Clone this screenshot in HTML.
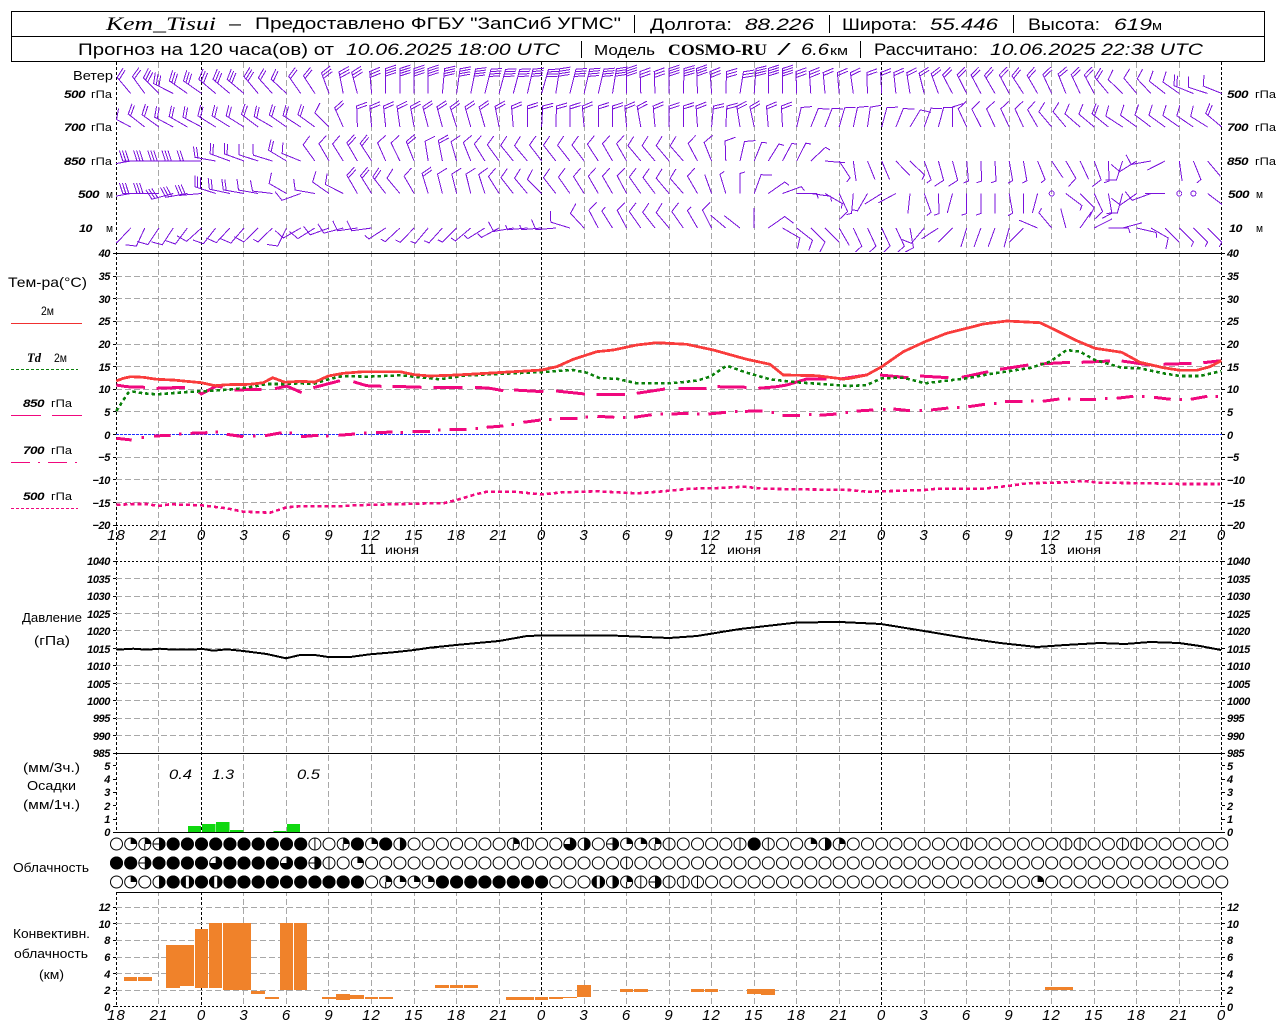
<!DOCTYPE html>
<html lang="ru"><head><meta charset="utf-8"><title>Kem_Tisui</title>
<style>
html,body{margin:0;padding:0;background:#fff}
svg{display:block}
text{font-family:"Liberation Sans",sans-serif;fill:#000}
.i{font-style:italic}
.t{font-size:17px}
.m{font-size:13px}
.y{font-style:italic;font-weight:bold;font-size:11px;letter-spacing:-.4px}
.x{font-style:italic;font-size:15px;text-anchor:middle;letter-spacing:1px}
.e{text-anchor:end}
.sf{font-family:"Liberation Serif",serif}
</style></head><body>
<svg xmlns="http://www.w3.org/2000/svg" width="1280" height="1024" viewBox="0 0 1280 1024">
<defs>
<clipPath id="wc"><rect x="116" y="62" width="1106" height="190"/></clipPath>
<path id="n" d="M0 0V-20"/>
<path id="h" d="M0 0V-20l5-1.6"/>
<path id="a" d="M0 0V-20l10.5-3.4"/>
<path id="b" d="M0 0V-21l10.5-3.4M0-18l10.5-3.4"/>
<path id="c" d="M0 0V-22l10.5-3.4M0-19l10.5-3.4M0-16l10.5-3.4"/>
<path id="d" d="M0 0V-25l10.5-3.4M0-22.5l10.5-3.4M0-20l10.5-3.4M0-17.5l10.5-3.4"/>
<circle id="o" r="6" fill="#fff" stroke="#000"/>
<circle id="F" r="6.5" fill="#000"/>
<path id="q" d="M0 0V-6.5A6.5 6.5 0 0 1 6.5 0Z" fill="#000"/>
<path id="Q" d="M0 0V-6.5A6.5 6.5 0 0 1 6.5 0ZM-.5 0h1v6h-1Z" fill="#000"/>
<path id="R" d="M0-6.5A6.5 6.5 0 0 1 0 6.5Z" fill="#000"/>
<path id="H" d="M0-6.5A6.5 6.5 0 0 1 0 6.5ZM-6 -.5h6v1h-6Z" fill="#000"/>
<path id="V" d="M-.5-6h1v12h-1Z" fill="#000"/>
<path id="T" d="M0 0V-6.5A6.5 6.5 0 1 1-6.5 0Z" fill="#000"/>
<path id="B" d="M-1.5-6.4A6.5 6.5 0 0 0-1.5 6.4ZM1.5-6.4A6.5 6.5 0 0 1 1.5 6.4Z" fill="#000"/>
</defs>
<rect width="1280" height="1024" fill="#fff"/>

<!-- vertical grid -->
<path fill="none" stroke="#a8a8a8" stroke-dasharray="6 3" shape-rendering="crispEdges" d="M158.5 62V1007M243.5 62V1007M286.5 62V1007M328.5 62V1007M371.5 62V1007M414.5 62V1007M456.5 62V1007M499.5 62V1007M584.5 62V1007M626.5 62V1007M669.5 62V1007M711.5 62V1007M754.5 62V1007M796.5 62V1007M839.5 62V1007M924.5 62V1007M966.5 62V1007M1009.5 62V1007M1051.5 62V1007M1094.5 62V1007M1136.5 62V1007M1179.5 62V1007"/>
<path fill="none" stroke="#000" stroke-dasharray="3 2" shape-rendering="crispEdges" d="M116.5 62V1007M201.5 62V1007M541.5 62V1007M881.5 62V1007M1221.5 62V1007"/>
<!-- horizontal grid -->
<path fill="none" stroke="#a8a8a8" stroke-dasharray="6 3" shape-rendering="crispEdges" d="M116 276.5H1222M116 298.5H1222M116 321.5H1222M116 344.5H1222M116 366.5H1222M116 389.5H1222M116 411.5H1222M116 457.5H1222M116 479.5H1222M116 502.5H1222M116 578.5H1222M116 596.5H1222M116 613.5H1222M116 630.5H1222M116 648.5H1222M116 665.5H1222M116 683.5H1222M116 700.5H1222M116 718.5H1222M116 735.5H1222M116 907.5H1222M116 923.5H1222M116 940.5H1222M116 957.5H1222M116 973.5H1222M116 990.5H1222"/>
<rect x="100" y="833" width="1130" height="59" fill="#fff"/>
<!-- ticks -->
<path fill="none" stroke="#000" shape-rendering="crispEdges" d="M113 276.5h3M113 298.5h3M113 321.5h3M113 344.5h3M113 366.5h3M113 389.5h3M113 411.5h3M113 434.5h3M113 457.5h3M113 479.5h3M113 502.5h3M113 525.5h3M113 253.5h3M113 561.5h3M113 578.5h3M113 596.5h3M113 613.5h3M113 630.5h3M113 648.5h3M113 665.5h3M113 683.5h3M113 700.5h3M113 718.5h3M113 735.5h3M113 753.5h3M113 765.5h3M113 779.5h3M113 792.5h3M113 805.5h3M113 819.5h3M113 832.5h3M113 907.5h3M113 923.5h3M113 940.5h3M113 957.5h3M113 973.5h3M113 990.5h3M113 1006.5h3M1222 276.5h3M1222 298.5h3M1222 321.5h3M1222 344.5h3M1222 366.5h3M1222 389.5h3M1222 411.5h3M1222 434.5h3M1222 457.5h3M1222 479.5h3M1222 502.5h3M1222 525.5h3M1222 253.5h3M1222 561.5h3M1222 578.5h3M1222 596.5h3M1222 613.5h3M1222 630.5h3M1222 648.5h3M1222 665.5h3M1222 683.5h3M1222 700.5h3M1222 718.5h3M1222 735.5h3M1222 753.5h3M1222 765.5h3M1222 779.5h3M1222 792.5h3M1222 805.5h3M1222 819.5h3M1222 832.5h3M1222 907.5h3M1222 923.5h3M1222 940.5h3M1222 957.5h3M1222 973.5h3M1222 990.5h3M1222 1006.5h3"/>
<path fill="none" stroke="#000" shape-rendering="crispEdges" d="M116 253.5H1222M116 753.5H1222M116 832.5H1222M116 892.5H1222"/>
<path fill="none" stroke="#000" stroke-dasharray="2 2" shape-rendering="crispEdges" d="M116 525.5H1222M116 561.5H1222M116 1006.5H1222"/>
<path fill="none" stroke="#1f2fff" stroke-dasharray="3 1" shape-rendering="crispEdges" d="M116 434.5H1222"/>

<!-- header -->
<path fill="#fff" stroke="#000" shape-rendering="crispEdges" d="M11.5 11.5H1264.5V61.5H11.5Z"/>
<path fill="none" stroke="#000" shape-rendering="crispEdges" d="M11.5 36.5H1264.5M634.5 15V33M829.5 15V33M1013.5 15V33M581.5 41V58M860.5 41V58"/>
<text class="sf i" x="106" y="30" font-size="19" lengthAdjust="spacingAndGlyphs" textLength="110">Kem_Tisui</text>
<text class="t" x="229" y="29" lengthAdjust="spacingAndGlyphs" textLength="12">—</text>
<text class="t" x="255" y="29" lengthAdjust="spacingAndGlyphs" textLength="366">Предоставлено ФГБУ "ЗапСиб УГМС"</text>
<text class="t" x="650" y="30" lengthAdjust="spacingAndGlyphs" textLength="82">Долгота:</text>
<text class="t i" x="745" y="30" font-size="18" lengthAdjust="spacingAndGlyphs" textLength="69">88.226</text>
<text class="t" x="842" y="30" lengthAdjust="spacingAndGlyphs" textLength="75">Широта:</text>
<text class="t i" x="930" y="30" font-size="18" lengthAdjust="spacingAndGlyphs" textLength="68">55.446</text>
<text class="t" x="1028" y="30" lengthAdjust="spacingAndGlyphs" textLength="72">Высота:</text>
<text class="t i" x="1114" y="30" font-size="18" lengthAdjust="spacingAndGlyphs" textLength="38">619</text>
<text x="1152" y="30" font-size="13" lengthAdjust="spacingAndGlyphs" textLength="10">м</text>
<text class="t" x="78" y="55" lengthAdjust="spacingAndGlyphs" textLength="256">Прогноз на 120 часа(ов) от</text>
<text class="t i" x="346" y="55" lengthAdjust="spacingAndGlyphs" textLength="214">10.06.2025 18:00 UTC</text>
<text x="594" y="55" font-size="15" lengthAdjust="spacingAndGlyphs" textLength="61">Модель</text>
<text class="sf" x="668" y="55" font-size="16" font-weight="bold" lengthAdjust="spacingAndGlyphs" textLength="99">COSMO-RU</text>
<text class="t i" x="779" y="55" lengthAdjust="spacingAndGlyphs" textLength="9">/</text>
<text class="t i" x="801" y="55" lengthAdjust="spacingAndGlyphs" textLength="28">6.6</text>
<text x="830" y="55" font-size="13" lengthAdjust="spacingAndGlyphs" textLength="18">км</text>
<text class="t" x="874" y="55" lengthAdjust="spacingAndGlyphs" textLength="104">Рассчитано:</text>
<text class="t i" x="990" y="55" lengthAdjust="spacingAndGlyphs" textLength="213">10.06.2025 22:38 UTC</text>

<!-- left wind labels -->
<text class="m" x="73" y="80" lengthAdjust="spacingAndGlyphs" textLength="40">Ветер</text>
<text class="y" x="64" y="98" lengthAdjust="spacingAndGlyphs" textLength="21">500</text><text x="91" y="98" font-size="11" lengthAdjust="spacingAndGlyphs" textLength="21">гПа</text>
<text class="y" x="64" y="131" lengthAdjust="spacingAndGlyphs" textLength="21">700</text><text x="91" y="131" font-size="11" lengthAdjust="spacingAndGlyphs" textLength="21">гПа</text>
<text class="y" x="64" y="165" lengthAdjust="spacingAndGlyphs" textLength="21">850</text><text x="91" y="165" font-size="11" lengthAdjust="spacingAndGlyphs" textLength="21">гПа</text>
<text class="y" x="78" y="198" lengthAdjust="spacingAndGlyphs" textLength="21">500</text><text x="106" y="198" font-size="11" lengthAdjust="spacingAndGlyphs" textLength="7">м</text>
<text class="y" x="79" y="232" lengthAdjust="spacingAndGlyphs" textLength="13">10</text><text x="106" y="232" font-size="11" lengthAdjust="spacingAndGlyphs" textLength="7">м</text>
<text class="y" x="1227" y="98" lengthAdjust="spacingAndGlyphs" textLength="21">500</text><text x="1255" y="98" font-size="11" lengthAdjust="spacingAndGlyphs" textLength="21">гПа</text>
<text class="y" x="1227" y="131" lengthAdjust="spacingAndGlyphs" textLength="21">700</text><text x="1255" y="131" font-size="11" lengthAdjust="spacingAndGlyphs" textLength="21">гПа</text>
<text class="y" x="1227" y="165" lengthAdjust="spacingAndGlyphs" textLength="21">850</text><text x="1255" y="165" font-size="11" lengthAdjust="spacingAndGlyphs" textLength="21">гПа</text>
<text class="y" x="1228" y="198" lengthAdjust="spacingAndGlyphs" textLength="21">500</text><text x="1256" y="198" font-size="11" lengthAdjust="spacingAndGlyphs" textLength="7">м</text>
<text class="y" x="1229" y="232" lengthAdjust="spacingAndGlyphs" textLength="13">10</text><text x="1256" y="232" font-size="11" lengthAdjust="spacingAndGlyphs" textLength="7">м</text>

<!-- barbs -->
<g clip-path="url(#wc)" fill="none" stroke="#7a12dc" shape-rendering="crispEdges">
<g transform="translate(0 93.5)">
<use href="#b" transform="translate(130.7)rotate(-40)"/><use href="#b" transform="translate(144.8)rotate(-36)"/><use href="#c" transform="translate(159)rotate(-45)"/><use href="#c" transform="translate(173.2)rotate(-63)"/><use href="#c" transform="translate(187.4)rotate(-55)"/><use href="#c" transform="translate(201.5)rotate(-55)"/><use href="#c" transform="translate(215.7)rotate(-50)"/><use href="#c" transform="translate(229.9)rotate(-50)"/><use href="#c" transform="translate(244)rotate(-50)"/><use href="#c" transform="translate(258.2)rotate(-40)"/><use href="#b" transform="translate(272.4)rotate(-42)"/><use href="#b" transform="translate(286.5)rotate(-47)"/><use href="#b" transform="translate(300.7)rotate(-35)"/><use href="#b" transform="translate(314.9)rotate(-33)"/><use href="#c" transform="translate(329)rotate(-20)"/><use href="#c" transform="translate(343.2)rotate(-11)"/><use href="#c" transform="translate(357.4)rotate(-15)"/><use href="#c" transform="translate(371.6)rotate(-5)"/><use href="#d" transform="translate(385.7)"/><use href="#d" transform="translate(399.9)"/><use href="#d" transform="translate(414.1)"/><use href="#d" transform="translate(428.2)"/><use href="#d" transform="translate(442.4)rotate(5)"/><use href="#d" transform="translate(456.6)rotate(8)"/><use href="#d" transform="translate(470.8)rotate(11)"/><use href="#d" transform="translate(484.9)rotate(14)"/><use href="#d" transform="translate(499.1)rotate(15)"/><use href="#d" transform="translate(513.3)rotate(15)"/><use href="#d" transform="translate(527.4)rotate(13)"/><use href="#d" transform="translate(541.6)rotate(16)"/><use href="#d" transform="translate(555.8)rotate(9)"/><use href="#d" transform="translate(569.9)rotate(14)"/><use href="#d" transform="translate(584.1)rotate(13)"/><use href="#d" transform="translate(598.3)rotate(13)"/><use href="#d" transform="translate(612.5)rotate(9)"/><use href="#d" transform="translate(626.6)"/><use href="#c" transform="translate(640.8)rotate(-2)"/><use href="#c" transform="translate(655)rotate(-2)"/><use href="#d" transform="translate(669.1)"/><use href="#d" transform="translate(683.3)rotate(2)"/><use href="#d" transform="translate(697.5)rotate(-2)"/><use href="#c" transform="translate(711.6)rotate(-4)"/><use href="#c" transform="translate(725.8)rotate(2)"/><use href="#c" transform="translate(740)rotate(9)"/><use href="#d" transform="translate(754.2)rotate(4)"/><use href="#d" transform="translate(768.3)"/><use href="#d" transform="translate(782.5)"/><use href="#c" transform="translate(796.7)rotate(-2)"/><use href="#c" transform="translate(810.8)rotate(-4)"/><use href="#b" transform="translate(825)rotate(-5)"/><use href="#b" transform="translate(839.2)rotate(-5)"/><use href="#b" transform="translate(853.3)rotate(-8)"/><use href="#b" transform="translate(867.5)rotate(-2)"/><use href="#b" transform="translate(881.7)rotate(-3)"/><use href="#b" transform="translate(895.9)rotate(-6)"/><use href="#b" transform="translate(910)rotate(-9)"/><use href="#b" transform="translate(924.2)rotate(-14)"/><use href="#b" transform="translate(938.4)rotate(-20)"/><use href="#b" transform="translate(952.5)rotate(-28)"/><use href="#b" transform="translate(966.7)rotate(-27)"/><use href="#b" transform="translate(980.9)rotate(-28)"/><use href="#b" transform="translate(995)rotate(-30)"/><use href="#b" transform="translate(1009.2)rotate(-28)"/><use href="#b" transform="translate(1023.4)rotate(-33)"/><use href="#b" transform="translate(1037.6)rotate(-30)"/><use href="#b" transform="translate(1051.7)rotate(-25)"/><use href="#b" transform="translate(1065.9)rotate(-22)"/><use href="#b" transform="translate(1080.1)rotate(-25)"/><use href="#b" transform="translate(1094.2)rotate(-28)"/><use href="#b" transform="translate(1108.4)rotate(-40)"/><use href="#a" transform="translate(1122.6)rotate(-46)"/><use href="#a" transform="translate(1136.7)rotate(-40)"/><use href="#a" transform="translate(1150.9)rotate(-43)"/><use href="#a" transform="translate(1165.1)rotate(-52)"/><use href="#a" transform="translate(1179.3)rotate(-55)"/><use href="#b" transform="translate(1193.4)rotate(-68)"/><use href="#a" transform="translate(1207.6)rotate(-72)"/><use href="#a" transform="translate(1221.8)rotate(-68)"/>
</g>
<g transform="translate(0 127)">
<use href="#c" transform="translate(130.7)rotate(-62)"/><use href="#b" transform="translate(144.8)rotate(-52)"/><use href="#b" transform="translate(159)rotate(-54)"/><use href="#b" transform="translate(173.2)rotate(-62)"/><use href="#b" transform="translate(187.4)rotate(-60)"/><use href="#b" transform="translate(201.5)rotate(-62)"/><use href="#b" transform="translate(215.7)rotate(-58)"/><use href="#b" transform="translate(229.9)rotate(-58)"/><use href="#b" transform="translate(244)rotate(-58)"/><use href="#b" transform="translate(258.2)rotate(-53)"/><use href="#b" transform="translate(272.4)rotate(-60)"/><use href="#b" transform="translate(286.5)rotate(-55)"/><use href="#b" transform="translate(300.7)rotate(-57)"/><use href="#b" transform="translate(314.9)rotate(-54)"/><use href="#a" transform="translate(329)rotate(-45)"/><use href="#b" transform="translate(343.2)rotate(-24)"/><use href="#b" transform="translate(357.4)rotate(-2)"/><use href="#b" transform="translate(371.6)rotate(-5)"/><use href="#b" transform="translate(385.7)rotate(-6)"/><use href="#b" transform="translate(399.9)rotate(-8)"/><use href="#b" transform="translate(414.1)rotate(-10)"/><use href="#b" transform="translate(428.2)rotate(-15)"/><use href="#b" transform="translate(442.4)rotate(-15)"/><use href="#b" transform="translate(456.6)rotate(-18)"/><use href="#b" transform="translate(470.8)rotate(-16)"/><use href="#b" transform="translate(484.9)rotate(-16)"/><use href="#b" transform="translate(499.1)rotate(-11)"/><use href="#b" transform="translate(513.3)rotate(-5)"/><use href="#b" transform="translate(527.4)"/><use href="#b" transform="translate(541.6)rotate(3)"/><use href="#b" transform="translate(555.8)rotate(2)"/><use href="#b" transform="translate(569.9)"/><use href="#b" transform="translate(584.1)rotate(-5)"/><use href="#b" transform="translate(598.3)"/><use href="#b" transform="translate(612.5)"/><use href="#b" transform="translate(626.6)rotate(-5)"/><use href="#b" transform="translate(640.8)rotate(-10)"/><use href="#b" transform="translate(655)rotate(-5)"/><use href="#b" transform="translate(669.1)"/><use href="#b" transform="translate(683.3)"/><use href="#b" transform="translate(697.5)rotate(-4)"/><use href="#b" transform="translate(711.6)rotate(5)"/><use href="#b" transform="translate(725.8)rotate(3)"/><use href="#b" transform="translate(740)rotate(-9)"/><use href="#b" transform="translate(754.2)rotate(-12)"/><use href="#b" transform="translate(768.3)rotate(-5)"/><use href="#b" transform="translate(782.5)rotate(-3)"/><use href="#a" transform="translate(796.7)rotate(13)"/><use href="#a" transform="translate(810.8)rotate(22)"/><use href="#a" transform="translate(825)rotate(21)"/><use href="#a" transform="translate(839.2)rotate(16)"/><use href="#a" transform="translate(853.3)rotate(12)"/><use href="#a" transform="translate(867.5)rotate(8)"/><use href="#a" transform="translate(881.7)rotate(15)"/><use href="#a" transform="translate(895.9)rotate(22)"/><use href="#a" transform="translate(910)rotate(31)"/><use href="#a" transform="translate(924.2)rotate(20)"/><use href="#a" transform="translate(938.4)rotate(15)"/><use href="#a" transform="translate(952.5)"/><use href="#a" transform="translate(966.7)rotate(-25)"/><use href="#a" transform="translate(980.9)rotate(-27)"/><use href="#a" transform="translate(995)rotate(-25)"/><use href="#a" transform="translate(1009.2)rotate(-25)"/><use href="#a" transform="translate(1023.4)rotate(-25)"/><use href="#a" transform="translate(1037.6)rotate(-30)"/><use href="#a" transform="translate(1051.7)rotate(-40)"/><use href="#a" transform="translate(1065.9)rotate(-40)"/><use href="#a" transform="translate(1080.1)rotate(-49)"/><use href="#a" transform="translate(1094.2)rotate(-50)"/><use href="#b" transform="translate(1108.4)rotate(-51)"/><use href="#a" transform="translate(1122.6)rotate(-57)"/><use href="#a" transform="translate(1136.7)rotate(-54)"/><use href="#a" transform="translate(1150.9)rotate(-53)"/><use href="#a" transform="translate(1165.1)rotate(-54)"/><use href="#a" transform="translate(1179.3)rotate(-55)"/><use href="#a" transform="translate(1193.4)rotate(-56)"/><use href="#a" transform="translate(1207.6)rotate(-58)"/><use href="#b" transform="translate(1221.8)rotate(-50)"/>
</g>
<g transform="translate(0 161)">
<use href="#c" transform="translate(130.7)rotate(-100)"/><use href="#c" transform="translate(144.8)rotate(-90)"/><use href="#c" transform="translate(159)rotate(-90)"/><use href="#c" transform="translate(173.2)rotate(-90)"/><use href="#c" transform="translate(187.4)rotate(-90)"/><use href="#b" transform="translate(201.5)rotate(-90)"/><use href="#b" transform="translate(215.7)rotate(-80)"/><use href="#b" transform="translate(229.9)rotate(-70)"/><use href="#b" transform="translate(244)rotate(-70)"/><use href="#a" transform="translate(258.2)rotate(-72)"/><use href="#a" transform="translate(272.4)rotate(-73)"/><use href="#b" transform="translate(286.5)rotate(-59)"/><use href="#a" transform="translate(300.7)rotate(-68)"/><use href="#a" transform="translate(314.9)rotate(-36)"/><use href="#a" transform="translate(329)rotate(-30)"/><use href="#a" transform="translate(343.2)rotate(-32)"/><use href="#b" transform="translate(357.4)rotate(-30)"/><use href="#b" transform="translate(371.6)rotate(-33)"/><use href="#a" transform="translate(385.7)rotate(-24)"/><use href="#a" transform="translate(399.9)rotate(-26)"/><use href="#b" transform="translate(414.1)rotate(-22)"/><use href="#a" transform="translate(428.2)rotate(-9)"/><use href="#b" transform="translate(442.4)rotate(-11)"/><use href="#a" transform="translate(456.6)rotate(-16)"/><use href="#a" transform="translate(470.8)rotate(-22)"/><use href="#a" transform="translate(484.9)rotate(-32)"/><use href="#a" transform="translate(499.1)rotate(-36)"/><use href="#a" transform="translate(513.3)rotate(-39)"/><use href="#a" transform="translate(527.4)rotate(-40)"/><use href="#a" transform="translate(541.6)rotate(-37)"/><use href="#a" transform="translate(555.8)rotate(-38)"/><use href="#a" transform="translate(569.9)rotate(-38)"/><use href="#a" transform="translate(584.1)rotate(-37)"/><use href="#a" transform="translate(598.3)rotate(-33)"/><use href="#a" transform="translate(612.5)rotate(-30)"/><use href="#a" transform="translate(626.6)rotate(-30)"/><use href="#a" transform="translate(640.8)rotate(-40)"/><use href="#a" transform="translate(655)rotate(-40)"/><use href="#a" transform="translate(669.1)rotate(-40)"/><use href="#a" transform="translate(683.3)rotate(-41)"/><use href="#a" transform="translate(697.5)rotate(-28)"/><use href="#a" transform="translate(711.6)rotate(-22)"/><use href="#a" transform="translate(725.8)rotate(-2)"/><use href="#a" transform="translate(740)rotate(13)"/><use href="#h" transform="translate(754.2)rotate(22)"/><use href="#h" transform="translate(768.3)rotate(32)"/><use href="#h" transform="translate(782.5)rotate(28)"/><use href="#h" transform="translate(796.7)rotate(27)"/><use href="#h" transform="translate(810.8)rotate(47)"/><use href="#n" transform="translate(825)rotate(95)"/><use href="#h" transform="translate(839.2)rotate(147)"/><use href="#n" transform="translate(853.3)rotate(172)"/><use href="#n" transform="translate(867.5)rotate(158)"/><use href="#n" transform="translate(881.7)rotate(157)"/><use href="#n" transform="translate(895.9)rotate(136)"/><use href="#h" transform="translate(910)rotate(134)"/><use href="#h" transform="translate(924.2)rotate(160)"/><use href="#a" transform="translate(938.4)rotate(165)"/><use href="#a" transform="translate(952.5)rotate(165)"/><use href="#h" transform="translate(966.7)rotate(175)"/><use href="#h" transform="translate(980.9)rotate(178)"/><use href="#h" transform="translate(995)rotate(177)"/><use href="#h" transform="translate(1009.2)rotate(170)"/><use href="#h" transform="translate(1023.4)rotate(170)"/><use href="#h" transform="translate(1037.6)rotate(158)"/><use href="#n" transform="translate(1051.7)rotate(146)"/><use href="#a" transform="translate(1065.9)rotate(150)"/><use href="#n" transform="translate(1080.1)rotate(155)"/><use href="#a" transform="translate(1094.2)rotate(160)"/><use href="#h" transform="translate(1108.4)rotate(178)"/><use href="#a" transform="translate(1122.6)rotate(-162)"/><use href="#a" transform="translate(1136.7)rotate(-122)"/><use href="#a" transform="translate(1150.9)rotate(-100)"/><use href="#n" transform="translate(1165.1)rotate(-117)"/><use href="#n" transform="translate(1179.3)rotate(172)"/><use href="#h" transform="translate(1193.4)rotate(158)"/><use href="#n" transform="translate(1207.6)rotate(140)"/>
</g>
<g transform="translate(0 193.5)">
<use href="#c" transform="translate(130.7)rotate(-100)"/><use href="#c" transform="translate(144.8)rotate(-90)"/><use href="#c" transform="translate(159)rotate(-90)"/><use href="#c" transform="translate(173.2)rotate(-105)"/><use href="#c" transform="translate(187.4)rotate(-100)"/><use href="#c" transform="translate(201.5)rotate(-95)"/><use href="#c" transform="translate(215.7)rotate(-72)"/><use href="#b" transform="translate(229.9)rotate(-78)"/><use href="#b" transform="translate(244)rotate(-80)"/><use href="#a" transform="translate(258.2)rotate(-80)"/><use href="#a" transform="translate(272.4)rotate(-83)"/><use href="#a" transform="translate(286.5)rotate(-60)"/><use href="#a" transform="translate(300.7)rotate(-110)"/><use href="#a" transform="translate(314.9)rotate(-80)"/><use href="#a" transform="translate(329)rotate(-55)"/><use href="#a" transform="translate(343.2)rotate(-63)"/><use href="#b" transform="translate(357.4)rotate(-30)"/><use href="#b" transform="translate(371.6)rotate(-32)"/><use href="#b" transform="translate(385.7)rotate(-38)"/><use href="#a" transform="translate(399.9)rotate(-40)"/><use href="#a" transform="translate(414.1)rotate(-30)"/><use href="#b" transform="translate(428.2)rotate(-17)"/><use href="#a" transform="translate(442.4)rotate(-14)"/><use href="#a" transform="translate(456.6)rotate(-14)"/><use href="#a" transform="translate(470.8)rotate(-14)"/><use href="#a" transform="translate(484.9)rotate(-18)"/><use href="#a" transform="translate(499.1)rotate(-32)"/><use href="#a" transform="translate(513.3)rotate(-38)"/><use href="#a" transform="translate(527.4)rotate(-40)"/><use href="#a" transform="translate(541.6)rotate(-45)"/><use href="#a" transform="translate(555.8)rotate(-38)"/><use href="#a" transform="translate(569.9)rotate(-35)"/><use href="#a" transform="translate(584.1)rotate(-32)"/><use href="#a" transform="translate(598.3)rotate(-30)"/><use href="#a" transform="translate(612.5)rotate(-30)"/><use href="#a" transform="translate(626.6)rotate(-28)"/><use href="#a" transform="translate(640.8)rotate(-35)"/><use href="#a" transform="translate(655)rotate(-37)"/><use href="#a" transform="translate(669.1)rotate(-40)"/><use href="#a" transform="translate(683.3)rotate(-41)"/><use href="#a" transform="translate(697.5)rotate(-30)"/><use href="#n" transform="translate(711.6)rotate(-20)"/><use href="#h" transform="translate(725.8)rotate(-17)"/><use href="#h" transform="translate(740)"/><use href="#a" transform="translate(754.2)rotate(20)"/><use href="#h" transform="translate(768.3)rotate(55)"/><use href="#h" transform="translate(782.5)rotate(70)"/><use href="#h" transform="translate(796.7)rotate(90)"/><use href="#h" transform="translate(810.8)rotate(98)"/><use href="#h" transform="translate(825)rotate(120)"/><use href="#a" transform="translate(839.2)rotate(155)"/><use href="#h" transform="translate(853.3)rotate(-175)"/><use href="#h" transform="translate(867.5)rotate(-150)"/><use href="#n" transform="translate(881.7)rotate(-122)"/><use href="#n" transform="translate(895.9)rotate(-118)"/><use href="#n" transform="translate(910)rotate(-174)"/><use href="#h" transform="translate(924.2)rotate(160)"/><use href="#h" transform="translate(938.4)rotate(178)"/><use href="#n" transform="translate(952.5)rotate(-165)"/><use href="#h" transform="translate(966.7)rotate(180)"/><use href="#h" transform="translate(980.9)rotate(180)"/><use href="#n" transform="translate(995)rotate(180)"/><use href="#h" transform="translate(1009.2)rotate(170)"/><use href="#n" transform="translate(1023.4)rotate(180)"/><use href="#n" transform="translate(1037.6)rotate(-165)"/><use href="#h" transform="translate(1065.9)rotate(127)"/><use href="#a" transform="translate(1080.1)rotate(135)"/><use href="#a" transform="translate(1094.2)rotate(155)"/><use href="#a" transform="translate(1108.4)rotate(170)"/><use href="#a" transform="translate(1122.6)rotate(-165)"/><use href="#a" transform="translate(1136.7)rotate(-125)"/><use href="#a" transform="translate(1150.9)rotate(-110)"/><use href="#n" transform="translate(1165.1)rotate(-90)"/><use href="#n" transform="translate(1207.6)rotate(127)"/>
<circle cx="1051.7" r="2.5"/><circle cx="1179.3" r="2.5"/><circle cx="1193.4" r="2.5"/>
</g>
<g transform="translate(0 228)">
<use href="#a" transform="translate(130.7)rotate(-137)"/><use href="#a" transform="translate(144.8)rotate(-155)"/><use href="#a" transform="translate(159)rotate(-146)"/><use href="#a" transform="translate(173.2)rotate(-147)"/><use href="#a" transform="translate(187.4)rotate(-143)"/><use href="#a" transform="translate(201.5)rotate(-132)"/><use href="#a" transform="translate(215.7)rotate(-142)"/><use href="#a" transform="translate(229.9)rotate(-137)"/><use href="#a" transform="translate(244)rotate(-139)"/><use href="#a" transform="translate(258.2)rotate(-134)"/><use href="#h" transform="translate(272.4)rotate(-134)"/><use href="#a" transform="translate(286.5)rotate(-154)"/><use href="#a" transform="translate(300.7)rotate(-120)"/><use href="#a" transform="translate(314.9)rotate(-122)"/><use href="#a" transform="translate(329)rotate(-110)"/><use href="#a" transform="translate(343.2)rotate(-105)"/><use href="#a" transform="translate(357.4)rotate(-98)"/><use href="#a" transform="translate(371.6)rotate(-98)"/><use href="#h" transform="translate(385.7)rotate(-123)"/><use href="#h" transform="translate(399.9)rotate(-133)"/><use href="#h" transform="translate(414.1)rotate(-136)"/><use href="#h" transform="translate(428.2)rotate(-140)"/><use href="#h" transform="translate(442.4)rotate(-138)"/><use href="#h" transform="translate(456.6)rotate(-135)"/><use href="#h" transform="translate(470.8)rotate(-130)"/><use href="#h" transform="translate(484.9)rotate(-122)"/><use href="#h" transform="translate(499.1)rotate(-118)"/><use href="#a" transform="translate(513.3)rotate(-100)"/><use href="#h" transform="translate(527.4)rotate(-95)"/><use href="#h" transform="translate(541.6)rotate(-95)"/><use href="#a" transform="translate(555.8)rotate(-95)"/><use href="#a" transform="translate(569.9)rotate(-73)"/><use href="#a" transform="translate(584.1)rotate(-43)"/><use href="#a" transform="translate(598.3)rotate(-28)"/><use href="#h" transform="translate(612.5)rotate(-32)"/><use href="#a" transform="translate(626.6)rotate(-28)"/><use href="#a" transform="translate(640.8)rotate(-35)"/><use href="#a" transform="translate(655)rotate(-38)"/><use href="#a" transform="translate(669.1)rotate(-40)"/><use href="#a" transform="translate(683.3)rotate(-35)"/><use href="#h" transform="translate(697.5)rotate(-30)"/><use href="#a" transform="translate(711.6)rotate(-27)"/><use href="#n" transform="translate(725.8)rotate(-50)"/><use href="#n" transform="translate(740)rotate(-52)"/><use href="#n" transform="translate(754.2)"/><use href="#a" transform="translate(768.3)rotate(55)"/><use href="#a" transform="translate(782.5)rotate(120)"/><use href="#a" transform="translate(796.7)rotate(128)"/><use href="#a" transform="translate(810.8)rotate(135)"/><use href="#n" transform="translate(825)rotate(135)"/><use href="#n" transform="translate(839.2)rotate(150)"/><use href="#a" transform="translate(853.3)rotate(155)"/><use href="#a" transform="translate(867.5)rotate(155)"/><use href="#a" transform="translate(881.7)rotate(155)"/><use href="#a" transform="translate(895.9)rotate(155)"/><use href="#a" transform="translate(910)rotate(170)"/><use href="#a" transform="translate(924.2)rotate(-140)"/><use href="#n" transform="translate(938.4)rotate(-123)"/><use href="#n" transform="translate(952.5)rotate(-135)"/><use href="#n" transform="translate(966.7)rotate(-163)"/><use href="#n" transform="translate(980.9)rotate(-160)"/><use href="#n" transform="translate(995)rotate(-160)"/><use href="#n" transform="translate(1009.2)rotate(-165)"/><use href="#n" transform="translate(1023.4)rotate(-135)"/><use href="#n" transform="translate(1037.6)rotate(-67)"/><use href="#h" transform="translate(1051.7)rotate(-40)"/><use href="#n" transform="translate(1065.9)rotate(-15)"/><use href="#n" transform="translate(1080.1)rotate(35)"/><use href="#n" transform="translate(1094.2)rotate(63)"/><use href="#h" transform="translate(1108.4)rotate(90)"/><use href="#n" transform="translate(1122.6)rotate(75)"/><use href="#h" transform="translate(1136.7)rotate(103)"/><use href="#a" transform="translate(1150.9)rotate(120)"/><use href="#n" transform="translate(1165.1)rotate(135)"/><use href="#h" transform="translate(1179.3)rotate(135)"/><use href="#h" transform="translate(1193.4)rotate(135)"/><use href="#h" transform="translate(1207.6)rotate(135)"/>
</g>
</g>

<!-- temperature labels -->
<text x="8" y="287" font-size="14" lengthAdjust="spacingAndGlyphs" textLength="79">Тем-ра(°C)</text>
<text x="41" y="315" font-size="12" lengthAdjust="spacingAndGlyphs" textLength="13">2м</text>
<path stroke="#f03030" fill="none" shape-rendering="crispEdges" d="M11 323.5H82"/>
<text class="sf i" x="27" y="362" font-size="13" font-weight="bold" lengthAdjust="spacingAndGlyphs" textLength="14">Td</text><text x="54" y="362" font-size="12" lengthAdjust="spacingAndGlyphs" textLength="13">2м</text>
<path stroke="#0a800a" fill="none" stroke-dasharray="3 2" shape-rendering="crispEdges" d="M11 369.5H78"/>
<text class="y" x="23" y="407" lengthAdjust="spacingAndGlyphs" textLength="21">850</text><text x="51" y="407" font-size="11" lengthAdjust="spacingAndGlyphs" textLength="21">гПа</text>
<path stroke="#f0087e" fill="none" shape-rendering="crispEdges" d="M11 415.5H41M52 415.5H82"/>
<text class="y" x="23" y="454" lengthAdjust="spacingAndGlyphs" textLength="21">700</text><text x="51" y="454" font-size="11" lengthAdjust="spacingAndGlyphs" textLength="21">гПа</text>
<path stroke="#f0087e" fill="none" shape-rendering="crispEdges" d="M11 462.5H30M38 462.5H40M48 462.5H67M75 462.5H77"/>
<text class="y" x="23" y="500" lengthAdjust="spacingAndGlyphs" textLength="21">500</text><text x="51" y="500" font-size="11" lengthAdjust="spacingAndGlyphs" textLength="21">гПа</text>
<path stroke="#f0087e" fill="none" stroke-dasharray="3 2" shape-rendering="crispEdges" d="M11 508.5H78"/>

<g>
<text class="y e" x="110" y="257">40</text><text class="y e" x="110" y="280">35</text><text class="y e" x="110" y="303">30</text><text class="y e" x="110" y="325">25</text><text class="y e" x="110" y="348">20</text><text class="y e" x="110" y="371">15</text><text class="y e" x="110" y="393">10</text><text class="y e" x="110" y="416">5</text><text class="y e" x="110" y="439">0</text><text class="y e" x="110" y="461">−5</text><text class="y e" x="110" y="484">−10</text><text class="y e" x="110" y="507">−15</text><text class="y e" x="110" y="529">−20</text>
<text class="y e" x="110" y="565">1040</text><text class="y e" x="110" y="583">1035</text><text class="y e" x="110" y="600">1030</text><text class="y e" x="110" y="618">1025</text><text class="y e" x="110" y="635">1020</text><text class="y e" x="110" y="653">1015</text><text class="y e" x="110" y="670">1010</text><text class="y e" x="110" y="688">1005</text><text class="y e" x="110" y="705">1000</text><text class="y e" x="110" y="722">995</text><text class="y e" x="110" y="740">990</text><text class="y e" x="110" y="757">985</text>
<text class="y e" x="110" y="770">5</text><text class="y e" x="110" y="783">4</text><text class="y e" x="110" y="796">3</text><text class="y e" x="110" y="810">2</text><text class="y e" x="110" y="823">1</text><text class="y e" x="110" y="836">0</text>
<text class="y e" x="110" y="911">12</text><text class="y e" x="110" y="928">10</text><text class="y e" x="110" y="944">8</text><text class="y e" x="110" y="961">6</text><text class="y e" x="110" y="978">4</text><text class="y e" x="110" y="994">2</text><text class="y e" x="110" y="1011">0</text>
</g>
<g>
<text class="y" x="1227" y="257">40</text><text class="y" x="1227" y="280">35</text><text class="y" x="1227" y="303">30</text><text class="y" x="1227" y="325">25</text><text class="y" x="1227" y="348">20</text><text class="y" x="1227" y="371">15</text><text class="y" x="1227" y="393">10</text><text class="y" x="1227" y="416">5</text><text class="y" x="1227" y="439">0</text><text class="y" x="1227" y="461">−5</text><text class="y" x="1227" y="484">−10</text><text class="y" x="1227" y="507">−15</text><text class="y" x="1227" y="529">−20</text>
<text class="y" x="1227" y="565">1040</text><text class="y" x="1227" y="583">1035</text><text class="y" x="1227" y="600">1030</text><text class="y" x="1227" y="618">1025</text><text class="y" x="1227" y="635">1020</text><text class="y" x="1227" y="653">1015</text><text class="y" x="1227" y="670">1010</text><text class="y" x="1227" y="688">1005</text><text class="y" x="1227" y="705">1000</text><text class="y" x="1227" y="722">995</text><text class="y" x="1227" y="740">990</text><text class="y" x="1227" y="757">985</text>
<text class="y" x="1227" y="770">5</text><text class="y" x="1227" y="783">4</text><text class="y" x="1227" y="796">3</text><text class="y" x="1227" y="810">2</text><text class="y" x="1227" y="823">1</text><text class="y" x="1227" y="836">0</text>
<text class="y" x="1227" y="911">12</text><text class="y" x="1227" y="928">10</text><text class="y" x="1227" y="944">8</text><text class="y" x="1227" y="961">6</text><text class="y" x="1227" y="978">4</text><text class="y" x="1227" y="994">2</text><text class="y" x="1227" y="1011">0</text>
</g>

<!-- temperature curves -->
<g fill="none" shape-rendering="crispEdges">
<path stroke="#f0087e" stroke-width="2.6" stroke-dasharray="4 3" d="M116.3 505L133.3 504 146.7 504 158.3 506 170 504.3 201.3 505.3 226.7 508.3 243.3 511.7 270 512.7 286.7 507.3 300 506.3 340 506.3 353.3 505.3 393.3 504.3 430 503.3 443.3 503.3 456.7 500 473.3 495 486.7 491.7 513.3 491.7 541.7 494.3 563.3 492.3 596.7 491.3 636.7 493.3 663.3 491.3 690 488.7 720 488 743.3 486.7 763.3 488.7 796.7 489.3 850 490 866.7 491.7 881.7 491.3 925 490 936.7 488.7 983.3 488.7 1010 485.7 1026.7 483.3 1066.7 482.3 1083.3 481 1100 482.7 1150 483.3 1180 484 1220 484"/>
<path stroke="#f0087e" stroke-width="3" d="M116.3 438.3L131.7 440M141.5 437.3h2.5M154 436L170.7 435.3M179 434h2.5M190.7 433.3L207.3 432.7M215.5 432h2.5M226.7 434.3L243.3 436.7M253 436h2.5M265 435.7L281.7 432.7M289.5 433h2.5M301 436.7L318.3 435.3M326 436h2.5M338.3 435.3L355 434M364 433h2.5M376 432.7L392.7 432M400.5 432.7h2.5M412.7 431.3L430 431.3M438 430h2.5M449.3 429.3L466.7 429.3M475.5 428.7h2.5M486.7 427.3L503.3 426M511.5 424.3h2.5M523.3 422.3L540.7 420M549 419.3h2.5M560 418.3L577.7 418.3M585.5 417h2.5M597.3 416.3L614.3 417.3M623 417.3h2.5M634 417.3L651.7 414.7M660.5 414h2.5M671.7 414L688.3 413.3M697 414h2.5M708.3 414L726 412.3M735 411.3h2.5M745 411.3L762.7 411M771.5 412.3h2.5M782.7 415.3L800 415.3M809 414.3h2.5M819.3 415.3L836.7 414M845.5 412.3h2.5M856.7 411L873.3 410M883 409.3h2.5M893.3 409L910 410.7M919.5 410.7h2.5M931 410L948.3 408M957 407.3h2.5M968.3 406.7L985 404.3M994 403.3h2.5M1005 401.7L1022.7 401.3M1031 401h2.5M1042.7 401.3L1059.3 399M1068 399h2.5M1080 399.3L1096 399.3M1105 398.3h2.5M1116.7 398.3L1133.3 396.3M1142 396.3h2.5M1154 397.3L1170.7 399.3M1179.5 399.3h2.5M1190.7 399.3L1207.3 396.3M1215.5 396.3h2.5"/>
<path stroke="#f0087e" stroke-width="3" d="M116.3 385L126.7 386.7 145 387.3M156.7 388.3L185 387.3M199 392L201.3 394 216.7 386 222.7 387.3M234.3 390L261.7 389.3M275 388.7L286.7 386 301.7 392.7M313.3 387.7L340 380.7M353.3 381.7L366.7 385.7 381.7 386.3M392.7 386.3L421.7 387.3M433.3 387.3L462.7 387.7M475 387.3L490 388.3 503.3 390.7M514 390L543.3 391.7M556 391L585 394M596.7 394.7L625 394.7M636.7 393.3L665 389M678.3 388.3L706.7 388.3M717.3 386.7L746.7 387.3M758.3 388.3L776.7 386.7 786.7 385 806.7 379 826.7 379M840 379L866.7 375M880 375L908.3 377.7M920 376L948.3 377.7M961.7 377.3L988.3 371.7M1000 369.3L1028.3 365M1040 364L1070 362.3M1081.7 362.3L1110 361M1121.7 361L1150 365M1163.3 364.3L1191.7 363.3M1203.3 362.7L1221.3 360.7"/>
<path stroke="#0a800a" stroke-width="2.6" stroke-dasharray="3.5 3" d="M116.3 411L121.7 402.7 128.3 392.7 133.3 391.7 143.3 393.3 156.7 394.3 170 393.3 186.7 392 201.3 391.3 213.3 390.7 233.3 389.3 253.3 386.7 266.7 384 283.3 384 300 383.3 313.3 384 328.3 379.3 343.3 376 366.7 376.7 400 375.3 430 378.3 440 379.3 463.3 375.7 496.7 374 543.3 372 573.3 370 586.7 372.7 600 378.3 616.7 378.7 636.7 383.3 670 383.3 696.7 380.7 710 376.7 726.7 365.7 746.7 372.7 770 379.3 796.7 382.3 820 384 850 386 866.7 385 881.7 378.3 903.3 377.7 925 383.3 946.7 380.7 966.7 378.3 990 374 1010 371 1030 368 1050 361.7 1066.7 350 1080 351.7 1095 360 1121.7 367.7 1140 368.3 1163.3 373.3 1180 376 1200 376 1221.3 371"/>
<path stroke="#f93c3c" stroke-width="2.8" d="M116.3 381L123.3 378.3 130.7 376.7 143.3 377.3 156.7 379.3 173.3 380 186.7 381.3 201.3 382.7 215 385.7 226.7 384.7 250 384.3 263.3 382.7 272.7 377.7 285 382.3 300 381.3 315 382 328.3 376 343.3 373.3 363.3 371.7 400 371.7 414.3 374.7 430 376 456.7 375 496.7 372.7 541.7 370 556.7 366.7 573.3 359.3 596.7 351.7 613.3 350 636.7 345 656.7 342.7 686.7 344.3 713.3 350 746.7 359.3 770 364.3 783.3 375 816.7 375.7 843.3 379 850 378.3 866.7 375 881.7 366.7 903.3 351.7 925 341.7 946.7 333.3 966.7 328.3 983.3 324 1006.7 321 1040 322.7 1056.7 330.7 1076.7 340.7 1095 348.3 1121.7 352.3 1140 362.3 1163.3 367.7 1180 370.3 1196.7 370.3 1210 366.7 1221.3 360.7"/>
<path stroke="#000" stroke-width="2" d="M116.3 649.7L133.3 648.7 146.7 649.7 160 648.7 173.3 649.7 193.3 649.7 201.3 648.7 213.3 650.7 226.7 649.3 243.3 651 266.7 654 286 658.3 300 655 315 655 328.3 657 350 657 370 654.3 393.3 652.3 414.3 650 430 647.7 456 645 499 641 527 636 541 635.5 612 635.5 669 638 697 636 740 629 797 622.5 840 622 881 624 924 631 966 638 1000 643 1037 647 1065 645 1100 643 1125 644 1150 642 1179 643 1200 646 1221 650"/>
</g>

<!-- hour labels -->
<g>
<text class="x" x="116.5" y="540">18</text><text class="x" x="159" y="540">21</text><text class="x" x="201.5" y="540">0</text><text class="x" x="244" y="540">3</text><text class="x" x="286.5" y="540">6</text><text class="x" x="329" y="540">9</text><text class="x" x="371.5" y="540">12</text><text class="x" x="414" y="540">15</text><text class="x" x="456.5" y="540">18</text><text class="x" x="499" y="540">21</text><text class="x" x="541.5" y="540">0</text><text class="x" x="584" y="540">3</text><text class="x" x="626.5" y="540">6</text><text class="x" x="669" y="540">9</text><text class="x" x="711.5" y="540">12</text><text class="x" x="754" y="540">15</text><text class="x" x="796.5" y="540">18</text><text class="x" x="839" y="540">21</text><text class="x" x="881.5" y="540">0</text><text class="x" x="924" y="540">3</text><text class="x" x="966.5" y="540">6</text><text class="x" x="1009" y="540">9</text><text class="x" x="1051.5" y="540">12</text><text class="x" x="1094" y="540">15</text><text class="x" x="1136.5" y="540">18</text><text class="x" x="1179" y="540">21</text><text class="x" x="1221.5" y="540">0</text>
<text class="x" x="116.5" y="1020">18</text><text class="x" x="159" y="1020">21</text><text class="x" x="201.5" y="1020">0</text><text class="x" x="244" y="1020">3</text><text class="x" x="286.5" y="1020">6</text><text class="x" x="329" y="1020">9</text><text class="x" x="371.5" y="1020">12</text><text class="x" x="414" y="1020">15</text><text class="x" x="456.5" y="1020">18</text><text class="x" x="499" y="1020">21</text><text class="x" x="541.5" y="1020">0</text><text class="x" x="584" y="1020">3</text><text class="x" x="626.5" y="1020">6</text><text class="x" x="669" y="1020">9</text><text class="x" x="711.5" y="1020">12</text><text class="x" x="754" y="1020">15</text><text class="x" x="796.5" y="1020">18</text><text class="x" x="839" y="1020">21</text><text class="x" x="881.5" y="1020">0</text><text class="x" x="924" y="1020">3</text><text class="x" x="966.5" y="1020">6</text><text class="x" x="1009" y="1020">9</text><text class="x" x="1051.5" y="1020">12</text><text class="x" x="1094" y="1020">15</text><text class="x" x="1136.5" y="1020">18</text><text class="x" x="1179" y="1020">21</text><text class="x" x="1221.5" y="1020">0</text>
</g>
<text x="360" y="554" font-size="15" lengthAdjust="spacingAndGlyphs" textLength="16">11</text><text x="385" y="554" font-size="12" lengthAdjust="spacingAndGlyphs" textLength="34">июня</text>
<text x="700" y="554" font-size="15" lengthAdjust="spacingAndGlyphs" textLength="16">12</text><text x="727" y="554" font-size="12" lengthAdjust="spacingAndGlyphs" textLength="34">июня</text>
<text x="1040" y="554" font-size="15" lengthAdjust="spacingAndGlyphs" textLength="16">13</text><text x="1067" y="554" font-size="12" lengthAdjust="spacingAndGlyphs" textLength="34">июня</text>

<!-- side labels -->
<text class="m" x="22" y="622" lengthAdjust="spacingAndGlyphs" textLength="60">Давление</text>
<text class="m" x="34" y="645" font-size="14" lengthAdjust="spacingAndGlyphs" textLength="36">(гПа)</text>
<text class="m" x="23" y="772" lengthAdjust="spacingAndGlyphs" textLength="57">(мм/3ч.)</text>
<text class="m" x="27" y="790" lengthAdjust="spacingAndGlyphs" textLength="49">Осадки</text>
<text class="m" x="23" y="809" lengthAdjust="spacingAndGlyphs" textLength="57">(мм/1ч.)</text>
<text class="m" x="13" y="872" lengthAdjust="spacingAndGlyphs" textLength="76">Облачность</text>
<text class="m" x="13" y="938" lengthAdjust="spacingAndGlyphs" textLength="77">Конвективн.</text>
<text class="m" x="14" y="958" lengthAdjust="spacingAndGlyphs" textLength="74">облачность</text>
<text class="m" x="39" y="979" lengthAdjust="spacingAndGlyphs" textLength="25">(км)</text>

<!-- precipitation -->
<text class="i" x="169" y="779" font-size="14" lengthAdjust="spacingAndGlyphs" textLength="23">0.4</text>
<text class="i" x="212" y="779" font-size="14" lengthAdjust="spacingAndGlyphs" textLength="22">1.3</text>
<text class="i" x="297" y="779" font-size="14" lengthAdjust="spacingAndGlyphs" textLength="23">0.5</text>
<path fill="#10d810" shape-rendering="crispEdges" d="M188 826h13v6h-13ZM202 824h13.5v8H202ZM216 822h13.5v10H216ZM230 830h13.5v2H230ZM273.5 831h13v1h-13ZM287 824h13v8h-13Z"/>

<!-- clouds -->
<g id="r1" transform="translate(0 844)">
<use href="#o" x="116.5"/><use href="#o" x="130.7"/><use href="#o" x="144.8"/><use href="#o" x="159"/><use href="#o" x="173.2"/><use href="#o" x="187.4"/><use href="#o" x="201.5"/><use href="#o" x="215.7"/><use href="#o" x="229.9"/><use href="#o" x="244"/><use href="#o" x="258.2"/><use href="#o" x="272.4"/><use href="#o" x="286.5"/><use href="#o" x="300.7"/><use href="#o" x="314.9"/><use href="#o" x="329"/><use href="#o" x="343.2"/><use href="#o" x="357.4"/><use href="#o" x="371.6"/><use href="#o" x="385.7"/><use href="#o" x="399.9"/><use href="#o" x="414.1"/><use href="#o" x="428.2"/><use href="#o" x="442.4"/><use href="#o" x="456.6"/><use href="#o" x="470.8"/><use href="#o" x="484.9"/><use href="#o" x="499.1"/><use href="#o" x="513.3"/><use href="#o" x="527.4"/><use href="#o" x="541.6"/><use href="#o" x="555.8"/><use href="#o" x="569.9"/><use href="#o" x="584.1"/><use href="#o" x="598.3"/><use href="#o" x="612.5"/><use href="#o" x="626.6"/><use href="#o" x="640.8"/><use href="#o" x="655"/><use href="#o" x="669.1"/><use href="#o" x="683.3"/><use href="#o" x="697.5"/><use href="#o" x="711.6"/><use href="#o" x="725.8"/><use href="#o" x="740"/><use href="#o" x="754.2"/><use href="#o" x="768.3"/><use href="#o" x="782.5"/><use href="#o" x="796.7"/><use href="#o" x="810.8"/><use href="#o" x="825"/><use href="#o" x="839.2"/><use href="#o" x="853.3"/><use href="#o" x="867.5"/><use href="#o" x="881.7"/><use href="#o" x="895.9"/><use href="#o" x="910"/><use href="#o" x="924.2"/><use href="#o" x="938.4"/><use href="#o" x="952.5"/><use href="#o" x="966.7"/><use href="#o" x="980.9"/><use href="#o" x="995"/><use href="#o" x="1009.2"/><use href="#o" x="1023.4"/><use href="#o" x="1037.6"/><use href="#o" x="1051.7"/><use href="#o" x="1065.9"/><use href="#o" x="1080.1"/><use href="#o" x="1094.2"/><use href="#o" x="1108.4"/><use href="#o" x="1122.6"/><use href="#o" x="1136.7"/><use href="#o" x="1150.9"/><use href="#o" x="1165.1"/><use href="#o" x="1179.3"/><use href="#o" x="1193.4"/><use href="#o" x="1207.6"/><use href="#o" x="1221.8"/>
</g>
<use href="#r1" transform="translate(0 19)"/>
<use href="#r1" transform="translate(0 38)"/>
<g transform="translate(0 844)">
<use href="#q" x="130.7"/><use href="#Q" x="144.8"/><use href="#H" x="159"/><use href="#F" x="173.2"/><use href="#F" x="187.4"/><use href="#F" x="201.5"/><use href="#F" x="215.7"/><use href="#F" x="229.9"/><use href="#F" x="244"/><use href="#F" x="258.2"/><use href="#F" x="272.4"/><use href="#F" x="286.5"/><use href="#F" x="300.7"/><use href="#V" x="314.9"/><use href="#Q" x="343.2"/><use href="#F" x="357.4"/><use href="#q" x="371.6"/><use href="#F" x="385.7"/><use href="#R" x="399.9"/><use href="#Q" x="513.3"/><use href="#V" x="527.4"/><use href="#T" x="569.9"/><use href="#R" x="584.1"/><use href="#H" x="612.5"/><use href="#q" x="626.6"/><use href="#q" x="640.8"/><use href="#Q" x="655"/><use href="#V" x="669.1"/><use href="#V" x="740"/><use href="#F" x="754.2"/><use href="#V" x="768.3"/><use href="#q" x="810.8"/><use href="#R" x="825"/><use href="#Q" x="839.2"/><use href="#V" x="966.7"/><use href="#V" x="1065.9"/><use href="#V" x="1080.1"/><use href="#V" x="1122.6"/><use href="#V" x="1136.7"/>
</g>
<g transform="translate(0 863)">
<use href="#F" x="116.5"/><use href="#F" x="130.7"/><use href="#H" x="144.8"/><use href="#F" x="159"/><use href="#F" x="173.2"/><use href="#F" x="187.4"/><use href="#F" x="201.5"/><use href="#T" x="215.7"/><use href="#F" x="229.9"/><use href="#F" x="244"/><use href="#F" x="258.2"/><use href="#F" x="272.4"/><use href="#T" x="286.5"/><use href="#F" x="300.7"/><use href="#H" x="314.9"/><use href="#V" x="314.9"/><use href="#V" x="329"/><use href="#q" x="357.4"/><use href="#V" x="626.6"/>
</g>
<g transform="translate(0 882)">
<use href="#q" x="130.7"/><use href="#R" x="159"/><use href="#F" x="173.2"/><use href="#B" x="187.4"/><use href="#F" x="201.5"/><use href="#B" x="215.7"/><use href="#F" x="229.9"/><use href="#F" x="244"/><use href="#F" x="258.2"/><use href="#F" x="272.4"/><use href="#F" x="286.5"/><use href="#F" x="300.7"/><use href="#F" x="314.9"/><use href="#F" x="329"/><use href="#F" x="343.2"/><use href="#F" x="357.4"/><use href="#Q" x="385.7"/><use href="#q" x="399.9"/><use href="#q" x="414.1"/><use href="#q" x="428.2"/><use href="#F" x="442.4"/><use href="#F" x="456.6"/><use href="#F" x="470.8"/><use href="#F" x="484.9"/><use href="#F" x="499.1"/><use href="#F" x="513.3"/><use href="#F" x="527.4"/><use href="#F" x="541.6"/><use href="#B" x="598.3"/><use href="#R" x="612.5"/><use href="#Q" x="626.6"/><use href="#V" x="640.8"/><use href="#H" x="655"/><use href="#V" x="669.1"/><use href="#V" x="683.3"/><use href="#V" x="697.5"/><use href="#q" x="1037.6"/>
</g>

<!-- convective -->
<path fill="#f0822a" shape-rendering="crispEdges" d="M124 977h13v4h-13ZM138 977h14v4h-14ZM166 945h14v43h-14ZM180 945h14v41h-14ZM195 929h13v59h-13ZM209 923h13v65h-13ZM223 923h28v67h-28ZM251 991h14v3h-14ZM265 997h14v2h-14ZM280 923h13v67h-13ZM294 923h13v67h-13ZM322 997h14v2h-14ZM336 994h14v6h-14ZM350 995h14v4h-14ZM365 997h13v2h-13ZM379 997h14v2h-14ZM435 985h14v3h-14ZM450 985h13v3h-13ZM464 985h14v3h-14ZM506 997h28v3h-28ZM535 997h13v3h-13ZM549 997h14v2h-14ZM563 997h14v1h-14ZM577 985h14v12h-14ZM620 989h13v3h-13ZM634 989h14v3h-14ZM691 989h13v3h-13ZM705 989h13v3h-13ZM747 989h14v5h-14ZM761 989h14v6h-14ZM1045 987h28v3h-28Z"/>
</svg>
</body></html>
